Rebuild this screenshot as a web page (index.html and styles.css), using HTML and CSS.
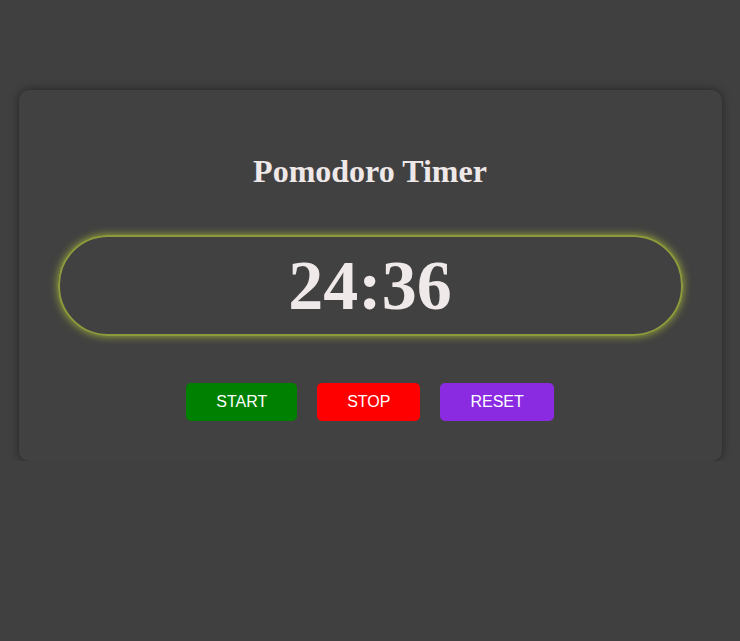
FILE: index.html
```html
<!DOCTYPE html>
<html>
<head>
<meta charset="utf-8">
<title>Pomodoro Timer</title>
<link rel="stylesheet" href="styles.css">
</head>
<body>
<div class="card">
  <h1 class="title">Pomodoro Timer</h1>
  <div class="timer">24:36</div>
  <div class="controls">
    <button class="btn btn-start">START</button>
    <button class="btn btn-stop">STOP</button>
    <button class="btn btn-reset">RESET</button>
  </div>
</div>
</body>
</html>
```

FILE: styles.css
```css
html, body {
  margin: 0;
  padding: 0;
  background: #404040;
  font-family: "Liberation Serif", "Times New Roman", serif;
}

body {
  padding-top: 90px;
}

.card {
  width: 95%;
  margin: 0 auto;
  box-sizing: border-box;
  background: #414141;
  border-radius: 10px;
  box-shadow: 0 0 10px rgba(0, 0, 0, 0.45);
  padding: 40px 39px 40px;
  display: flex;
  flex-direction: column;
  align-items: stretch;
}

.title {
  margin: 24px 0 0;
  text-align: center;
  font-size: 32px;
  line-height: 34px;
  font-weight: bold;
  color: #efe8e8;
}

.timer {
  margin-top: 47px;
  height: 97px;
  border: 2px solid #8e9b3c;
  border-radius: 50px;
  box-shadow: 0 0 8px #a3b23a;
  display: flex;
  align-items: center;
  justify-content: center;
  font-size: 70px;
  font-weight: bold;
  color: #efe9e9;
}

.controls {
  margin-top: 47px;
  display: flex;
  justify-content: center;
  gap: 20px;
}

.btn {
  border: none;
  border-radius: 5px;
  padding: 10px 30px;
  font-family: "Liberation Sans", Arial, sans-serif;
  font-size: 16px;
  line-height: 18px;
  color: #ffffff;
  cursor: pointer;
}

.btn-start { background: #008000; }
.btn-stop { background: #ff0000; }
.btn-reset { background: #8a2be2; }
```
